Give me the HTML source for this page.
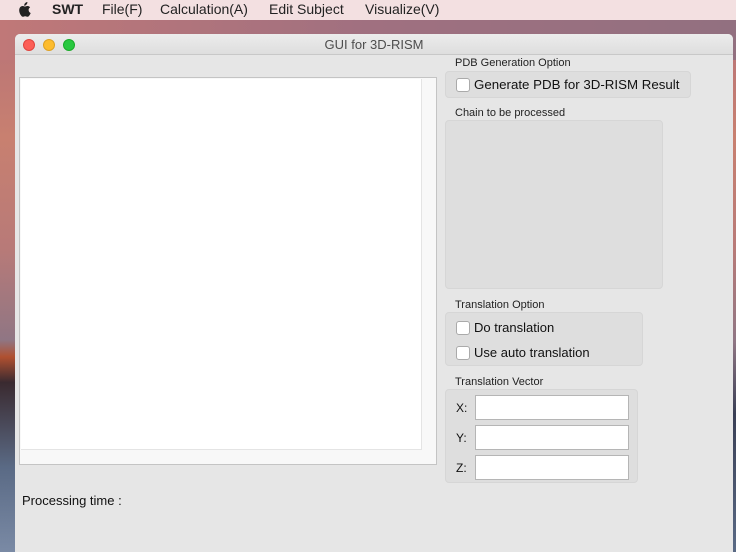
<!DOCTYPE html>
<html><head><meta charset="utf-8"><style>
*{margin:0;padding:0;box-sizing:border-box}
html,body{width:736px;height:552px;overflow:hidden}
body{position:relative;font-family:"Liberation Sans",sans-serif;
background:linear-gradient(180deg,#b4707a 0%,#c88070 25%,#b87a78 45%,#8f7684 62%,#3a3f55 75%,#5a6a85 100%);}
.desk2{position:absolute;left:0;top:20px;width:736px;height:40px;background:linear-gradient(90deg,#c07878,#a07080 50%,#927080);}
.rock{position:absolute;left:0;top:340px;width:15px;height:212px;background:linear-gradient(180deg,#8f7684 0%,#b05030 8%,#3a2a30 20%,#5a6a85 60%,#7a8aa5 100%)}
.menu{position:absolute;left:0;top:0;width:736px;height:20px;background:#f3e0e1;font-size:14px;color:#222;}
.menu span{position:absolute;top:1px}
.win{position:absolute;left:15px;top:34px;width:718px;height:518px;background:#e6e6e6;border-radius:5px 5px 0 0;overflow:hidden}
.title{height:21px;background:linear-gradient(#ececec,#dedede);border-bottom:1px solid #c8c8c8;text-align:center;font-size:13px;color:#4d4d4d;line-height:21px}
.dot{position:absolute;top:5px;width:12px;height:12px;border-radius:50%}
.a{position:absolute}
.grp{position:absolute;background:#dedede;border:1px solid #d6d6d6;border-radius:4px}
.lbl{position:absolute;font-size:11px;color:#222}
.cb{position:absolute;width:14px;height:14px;background:#fff;border:1px solid #aaa;border-radius:3px}
.t{position:absolute;font-size:13px;color:#111}
.in{position:absolute;left:475px;width:154px;height:25px;background:#fff;border:1px solid #b5b5b5}
</style></head><body>
<div class="desk2"></div><div class="rock"></div>
<div class="menu">
<span style="left:17px;top:2px;width:14px;height:15px;"><svg width="14" height="15" viewBox="0 0 14 15"><path d="M9.5 2.5c.6-.7 1-1.6.9-2.5-.9.1-1.9.6-2.4 1.3-.5.6-.9 1.5-.8 2.4.9.1 1.8-.5 2.3-1.2zM11.6 8c0-1.7 1.4-2.5 1.5-2.6-.8-1.2-2.1-1.4-2.5-1.4-1.1-.1-2.1.6-2.6.6s-1.4-.6-2.300-.6C4.5 4 3.4 4.7 2.8 5.8 1.5 8 2.5 11.3 3.7 13c.6.9 1.3 1.8 2.2 1.8.9 0 1.2-.6 2.3-.6s1.4.6 2.3.6c1 0 1.6-.9 2.2-1.8.7-1 1-2 1-2-.1 0-1.9-.7-2.1-3z" fill="#222"/></svg></span>
<span style="left:52px;font-weight:bold">SWT</span>
<span style="left:102px">File(F)</span>
<span style="left:160px">Calculation(A)</span>
<span style="left:269px">Edit Subject</span>
<span style="left:365px">Visualize(V)</span>
</div>
<div class="win">
<div class="title">GUI for 3D-RISM</div>
<div class="dot" style="left:8px;background:#fc5f57;border:1px solid #e0443e"></div>
<div class="dot" style="left:28px;background:#fdbc2e;border:1px solid #dea123"></div>
<div class="dot" style="left:48px;background:#29c840;border:1px solid #1aab29"></div>
</div>
<div class="a" style="left:19px;top:77px;width:418px;height:388px;background:#f8f8f8;border:1px solid #c4c4c4"></div>
<div class="a" style="left:21px;top:79px;width:401px;height:371px;background:#fff;border-right:1px solid #e4e4e4;border-bottom:1px solid #e4e4e4"></div>
<div class="lbl" style="left:455px;top:57px">PDB Generation Option</div>
<div class="grp" style="left:445px;top:71px;width:246px;height:27px"></div>
<div class="cb" style="left:456px;top:78px"></div>
<div class="t" style="left:474px;top:77px;font-size:13.3px">Generate PDB for 3D-RISM Result</div>
<div class="lbl" style="left:455px;top:107px">Chain to be processed</div>
<div class="grp" style="left:445px;top:120px;width:218px;height:169px"></div>
<div class="lbl" style="left:455px;top:299px">Translation Option</div>
<div class="grp" style="left:445px;top:312px;width:198px;height:54px"></div>
<div class="cb" style="left:456px;top:321px"></div>
<div class="t" style="left:474px;top:320px">Do translation</div>
<div class="cb" style="left:456px;top:346px"></div>
<div class="t" style="left:474px;top:345px">Use auto translation</div>
<div class="lbl" style="left:455px;top:376px">Translation Vector</div>
<div class="grp" style="left:445px;top:389px;width:193px;height:94px"></div>
<div class="t" style="left:456px;top:401px;font-size:12px">X:</div>
<div class="t" style="left:456px;top:431px;font-size:12px">Y:</div>
<div class="t" style="left:456px;top:461px;font-size:12px">Z:</div>
<div class="in" style="top:395px"></div>
<div class="in" style="top:425px"></div>
<div class="in" style="top:455px"></div>
<div class="t" style="left:22px;top:493px">Processing time :</div>
</body></html>
